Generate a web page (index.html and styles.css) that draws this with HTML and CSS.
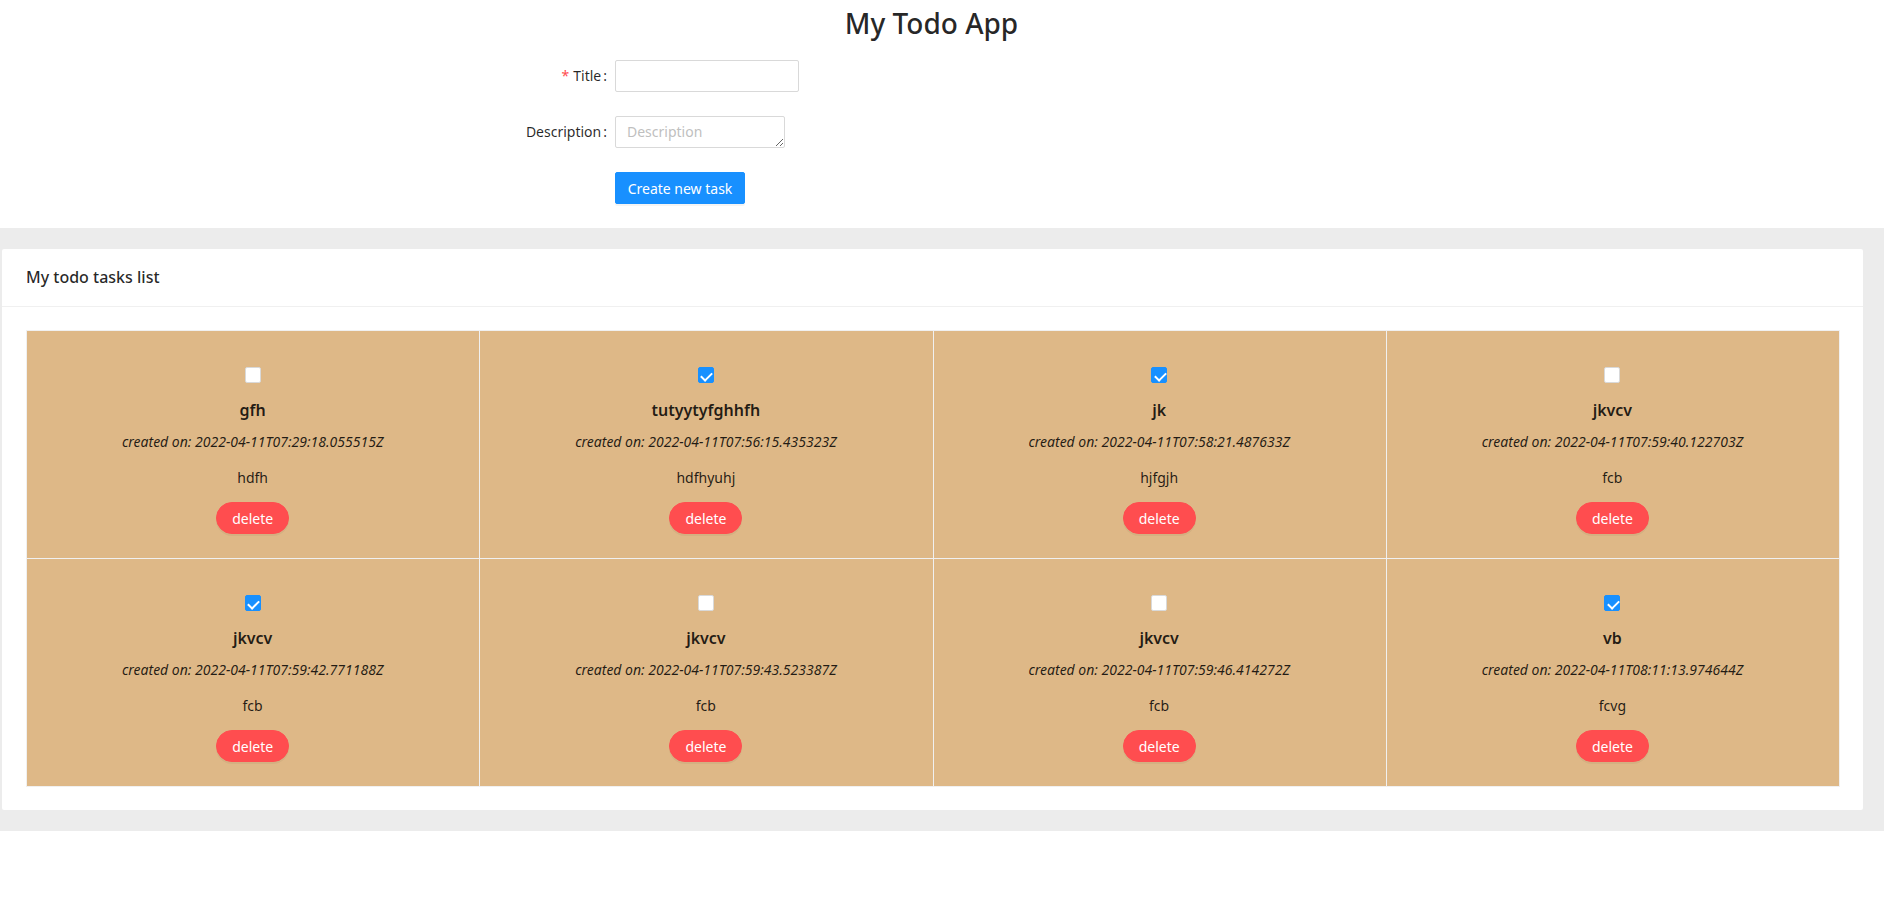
FILE: index.html
```html
<!DOCTYPE html>
<html lang="en">
<head>
<meta charset="utf-8">
<title>My Todo App</title>
<link rel="stylesheet" href="styles.css">
</head>
<body>
<div class="app">
  <header class="top">
    <h1 class="app-title">My Todo App</h1>
    <form class="task-form">
      <div class="form-row">
        <label class="form-label" for="title"><span class="req">*</span>Title<span class="colon">:</span></label>
        <div class="form-control"><input id="title" class="input title-input" type="text"></div>
      </div>
      <div class="form-row">
        <label class="form-label" for="desc">Description<span class="colon">:</span></label>
        <div class="form-control"><textarea id="desc" class="input desc-input" placeholder="Description"></textarea></div>
      </div>
      <div class="form-row">
        <div class="form-label"></div>
        <div class="form-control"><button type="button" class="btn-primary">Create new task</button></div>
      </div>
    </form>
  </header>

  <section class="layout">
    <div class="card">
      <div class="card-head">My todo tasks list</div>
      <div class="card-body">
        <div class="grid">
          <div class="cell">
            <div class="check-row"><input type="checkbox" class="check"></div>
            <div class="task-title">gfh</div>
            <div class="task-date">created on: 2022-04-11T07:29:18.055515Z</div>
            <div class="task-desc">hdfh</div>
            <button type="button" class="btn-delete">delete</button>
          </div>
          <div class="cell">
            <div class="check-row"><input type="checkbox" class="check" checked></div>
            <div class="task-title">tutyytyfghhfh</div>
            <div class="task-date">created on: 2022-04-11T07:56:15.435323Z</div>
            <div class="task-desc">hdfhyuhj</div>
            <button type="button" class="btn-delete">delete</button>
          </div>
          <div class="cell">
            <div class="check-row"><input type="checkbox" class="check" checked></div>
            <div class="task-title">jk</div>
            <div class="task-date">created on: 2022-04-11T07:58:21.487633Z</div>
            <div class="task-desc">hjfgjh</div>
            <button type="button" class="btn-delete">delete</button>
          </div>
          <div class="cell">
            <div class="check-row"><input type="checkbox" class="check"></div>
            <div class="task-title">jkvcv</div>
            <div class="task-date">created on: 2022-04-11T07:59:40.122703Z</div>
            <div class="task-desc">fcb</div>
            <button type="button" class="btn-delete">delete</button>
          </div>
          <div class="cell">
            <div class="check-row"><input type="checkbox" class="check" checked></div>
            <div class="task-title">jkvcv</div>
            <div class="task-date">created on: 2022-04-11T07:59:42.771188Z</div>
            <div class="task-desc">fcb</div>
            <button type="button" class="btn-delete">delete</button>
          </div>
          <div class="cell">
            <div class="check-row"><input type="checkbox" class="check"></div>
            <div class="task-title">jkvcv</div>
            <div class="task-date">created on: 2022-04-11T07:59:43.523387Z</div>
            <div class="task-desc">fcb</div>
            <button type="button" class="btn-delete">delete</button>
          </div>
          <div class="cell">
            <div class="check-row"><input type="checkbox" class="check"></div>
            <div class="task-title">jkvcv</div>
            <div class="task-date">created on: 2022-04-11T07:59:46.414272Z</div>
            <div class="task-desc">fcb</div>
            <button type="button" class="btn-delete">delete</button>
          </div>
          <div class="cell">
            <div class="check-row"><input type="checkbox" class="check" checked></div>
            <div class="task-title">vb</div>
            <div class="task-date">created on: 2022-04-11T08:11:13.974644Z</div>
            <div class="task-desc">fcvg</div>
            <button type="button" class="btn-delete">delete</button>
          </div>
        </div>
      </div>
    </div>
  </section>
</div>
</body>
</html>
```

FILE: styles.css
```css
* { box-sizing: border-box; }

html, body {
  margin: 0;
  padding: 0;
  background: #ffffff;
}

body {
  font-family: "Noto Sans", "Open Sans", sans-serif;
  font-size: 14px;
  line-height: 22px;
  color: rgba(0, 0, 0, 0.85);
}

.top {
  padding-right: 21px;
}

.app-title {
  margin: 4px 0 0;
  font-size: 28px;
  line-height: 38px;
  font-weight: 500;
  text-align: center;
}

.task-form {
  margin-top: 18px;
}

.form-row {
  display: grid;
  grid-template-columns: 615px 1fr;
  align-items: start;
  margin-bottom: 24px;
}

.form-label {
  text-align: right;
  padding-right: 8px;
  line-height: 32px;
  height: 32px;
  white-space: nowrap;
}

.req {
  color: #ff4d4f;
  margin-right: 4px;
}

.colon {
  margin-left: 2px;
}

.input {
  display: block;
  font-family: inherit;
  font-size: 14px;
  line-height: 22px;
  color: rgba(0, 0, 0, 0.85);
  border: 1px solid #d9d9d9;
  border-radius: 2px;
  padding: 4px 11px;
  background: #fff;
  outline: none;
}

.title-input {
  width: 184px;
  height: 32px;
}

.desc-input {
  width: 170px;
  height: 32px;
  resize: vertical;
  overflow: hidden;
}

.desc-input::placeholder {
  color: #bfbfbf;
}

.btn-primary {
  display: block;
  height: 32px;
  width: 130px;
  padding: 0;
  white-space: nowrap;
  border: 1px solid #1890ff;
  border-radius: 2px;
  background: #1890ff;
  color: #fff;
  font-family: inherit;
  font-size: 14px;
  box-shadow: 0 2px 0 rgba(0, 0, 0, 0.045);
}

.layout {
  background: #ececec;
  padding: 21px 21px 21px 2px;
}

.card {
  background: #fff;
  border-radius: 2px;
}

.card-head {
  height: 58px;
  line-height: 57px;
  padding: 0 24px;
  font-size: 16px;
  font-weight: 500;
  border-bottom: 1px solid #f0f0f0;
}

.card-body {
  padding: 23px 24px 24px 24px;
}

.grid {
  display: grid;
  grid-template-columns: repeat(4, 1fr);
}

.cell {
  background: #deb887;
  padding: 24px;
  height: 228px;
  text-align: center;
  box-shadow: 1px 0 0 0 #f0f0f0, 0 1px 0 0 #f0f0f0, 1px 1px 0 0 #f0f0f0, 1px 0 0 0 #f0f0f0 inset, 0 1px 0 0 #f0f0f0 inset;
}

.check-row {
  height: 16px;
  margin-top: 13px;
  display: flex;
  justify-content: center;
}

.check {
  appearance: none;
  -webkit-appearance: none;
  margin: 0;
  width: 16px;
  height: 16px;
  border: 1px solid #d9d9d9;
  border-radius: 2px;
  background: #fff;
  position: relative;
}

.check:checked {
  background: #1890ff;
  border-color: #1890ff;
}

.check:checked::after {
  content: "";
  position: absolute;
  left: 4.5px;
  top: 1.5px;
  width: 5px;
  height: 9px;
  border: 2px solid #fff;
  border-top: 0;
  border-left: 0;
  transform: rotate(45deg);
}

.task-title {
  margin-top: 15px;
  font-size: 16px;
  line-height: 24px;
  font-weight: 600;
}

.task-date {
  margin-top: 9px;
  font-style: italic;
}

.task-desc {
  margin-top: 14px;
}

.btn-delete {
  margin-top: 13px;
  height: 32px;
  padding: 0 15px;
  border: 1px solid #ff4d4f;
  border-radius: 32px;
  background: #ff4d4f;
  color: #fff;
  font-family: inherit;
  font-size: 14px;
  box-shadow: 0 2px 0 rgba(0, 0, 0, 0.045);
}
```
